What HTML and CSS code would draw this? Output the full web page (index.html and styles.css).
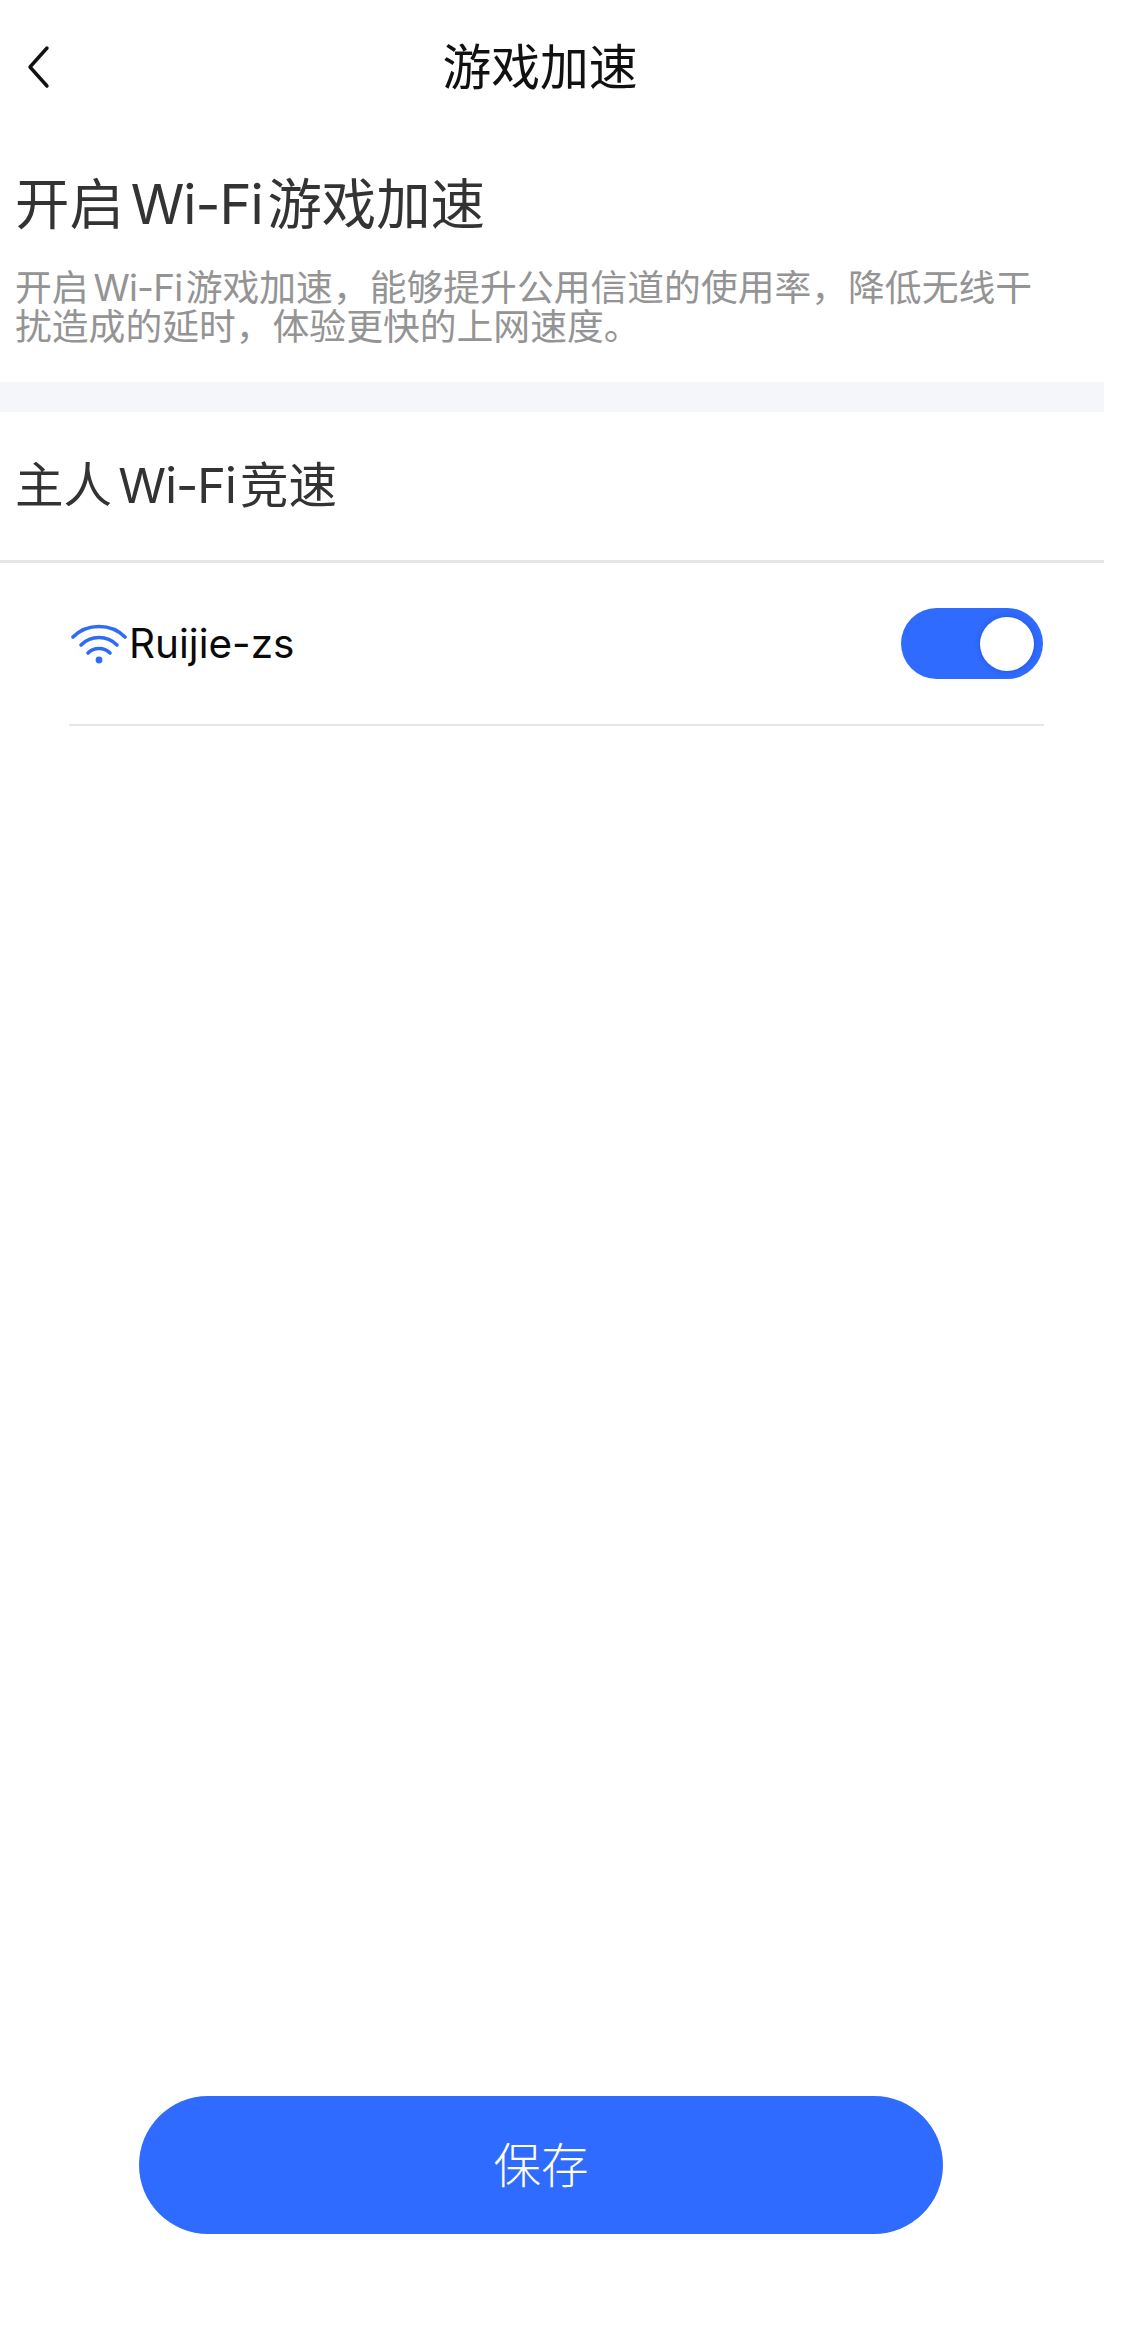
FILE: index.html
```html
<!DOCTYPE html>
<html lang="zh-CN">
<head>
<meta charset="utf-8">
<title>游戏加速</title>
<link rel="stylesheet" href="styles.css">
</head>
<body>
<div class="page">
  <header class="nav">
    <svg class="back" width="24" height="44" viewBox="0 0 24 44"><path d="M21 3 L4 22 L21 41" fill="none" stroke="#111" stroke-width="3.4" stroke-linecap="round" stroke-linejoin="round"/></svg>
    <h1 class="nav-title">游戏加速</h1>
  </header>
  <section class="intro">
    <h2 class="intro-title">开启<span class="lat">Wi-Fi</span>游戏加速</h2>
    <p class="intro-desc">开启<span class="lat">Wi-Fi</span>游戏加速，能够提升公用信道的使用率，降低无线干扰造成的延时，体验更快的上网速度。</p>
  </section>
  <div class="band"></div>
  <h2 class="section-title">主人<span class="lat">Wi-Fi</span>竞速</h2>
  <div class="row">
    <svg class="wifi" width="56" height="40" viewBox="0 0 56 40">
      <g fill="none" stroke="#2f6bf6" stroke-width="3.6" stroke-linecap="round">
        <path d="M2 13 C16 -1 40 -1 54 13"/>
        <path d="M10 21 C20 11 36 11 46 21"/>
        <path d="M17 29 C23 23 33 23 39 29"/>
      </g>
      <circle cx="28" cy="36" r="3.4" fill="#2f6bf6"/>
    </svg>
    <span class="row-name">Ruijie-zs</span>
    <span class="switch"><span class="knob"></span></span>
  </div>
  <button class="save">保存</button>
</div>
</body>
</html>
```
FILE: styles.css
```css
* { box-sizing: border-box; }
html, body { margin: 0; padding: 0; background: #fff; }
body { font-family: "Inter", "Noto Sans CJK SC", sans-serif; }
.page { width: 1104px; height: 2326px; display: flex; flex-direction: column; }
.nav { height: 134px; display: flex; align-items: center; position: relative; padding-left: 27px; }
.back { flex: none; margin-left: -1px; }
.nav-title { position: absolute; left: 0; width: 1080px; top: 38px; margin: 0; font-size: 48.8px; line-height: 60px; font-weight: 400; text-align: center; color: #111; }
.lat { display: inline-block; letter-spacing: -0.02em; margin: 0 0.09em 0 0.13em; }
.intro { height: 248px; padding: 34px 60px 0 15px; }
.intro-title { margin: 0; font-size: 54.4px; line-height: 72px; font-weight: 400; color: #333; }
.intro-desc { margin: 28px 0 0; font-size: 36.8px; line-height: 39px; font-weight: 400; color: #949494; }
.band { height: 30px; background: #f5f6fa; flex: none; }
.section-title { flex: none; height: 151px; margin: 0; padding: 41px 15px 0; font-size: 48.5px; line-height: 66px; font-weight: 400; color: #333; border-bottom: 3px solid #e5e5e5; }
.row { flex: none; height: 163px; margin: 0 60px 0 69px; display: flex; align-items: center; border-bottom: 2px solid #e6e6e6; padding: 0 1px 0 2px; }
.wifi { flex: none; margin-right: 2px; }
.row-name { font-size: 40.5px; color: #0a0a0a; }
.switch { margin-left: auto; width: 142px; height: 71px; border-radius: 36px; background: #2f6bff; display: flex; align-items: center; justify-content: flex-end; padding-right: 9px; }
.knob { width: 54px; height: 54px; border-radius: 50%; background: #fff; box-shadow: 0 0 6px rgba(0,0,0,.18); }
.save { flex: none; margin: auto 0 92px 139px; width: 804px; height: 138px; padding: 0 0 6px; border: 0; border-radius: 69px; background: #2f6bff; color: #fff; font: 300 47.5px "Inter", "Noto Sans CJK SC", sans-serif; }
```
